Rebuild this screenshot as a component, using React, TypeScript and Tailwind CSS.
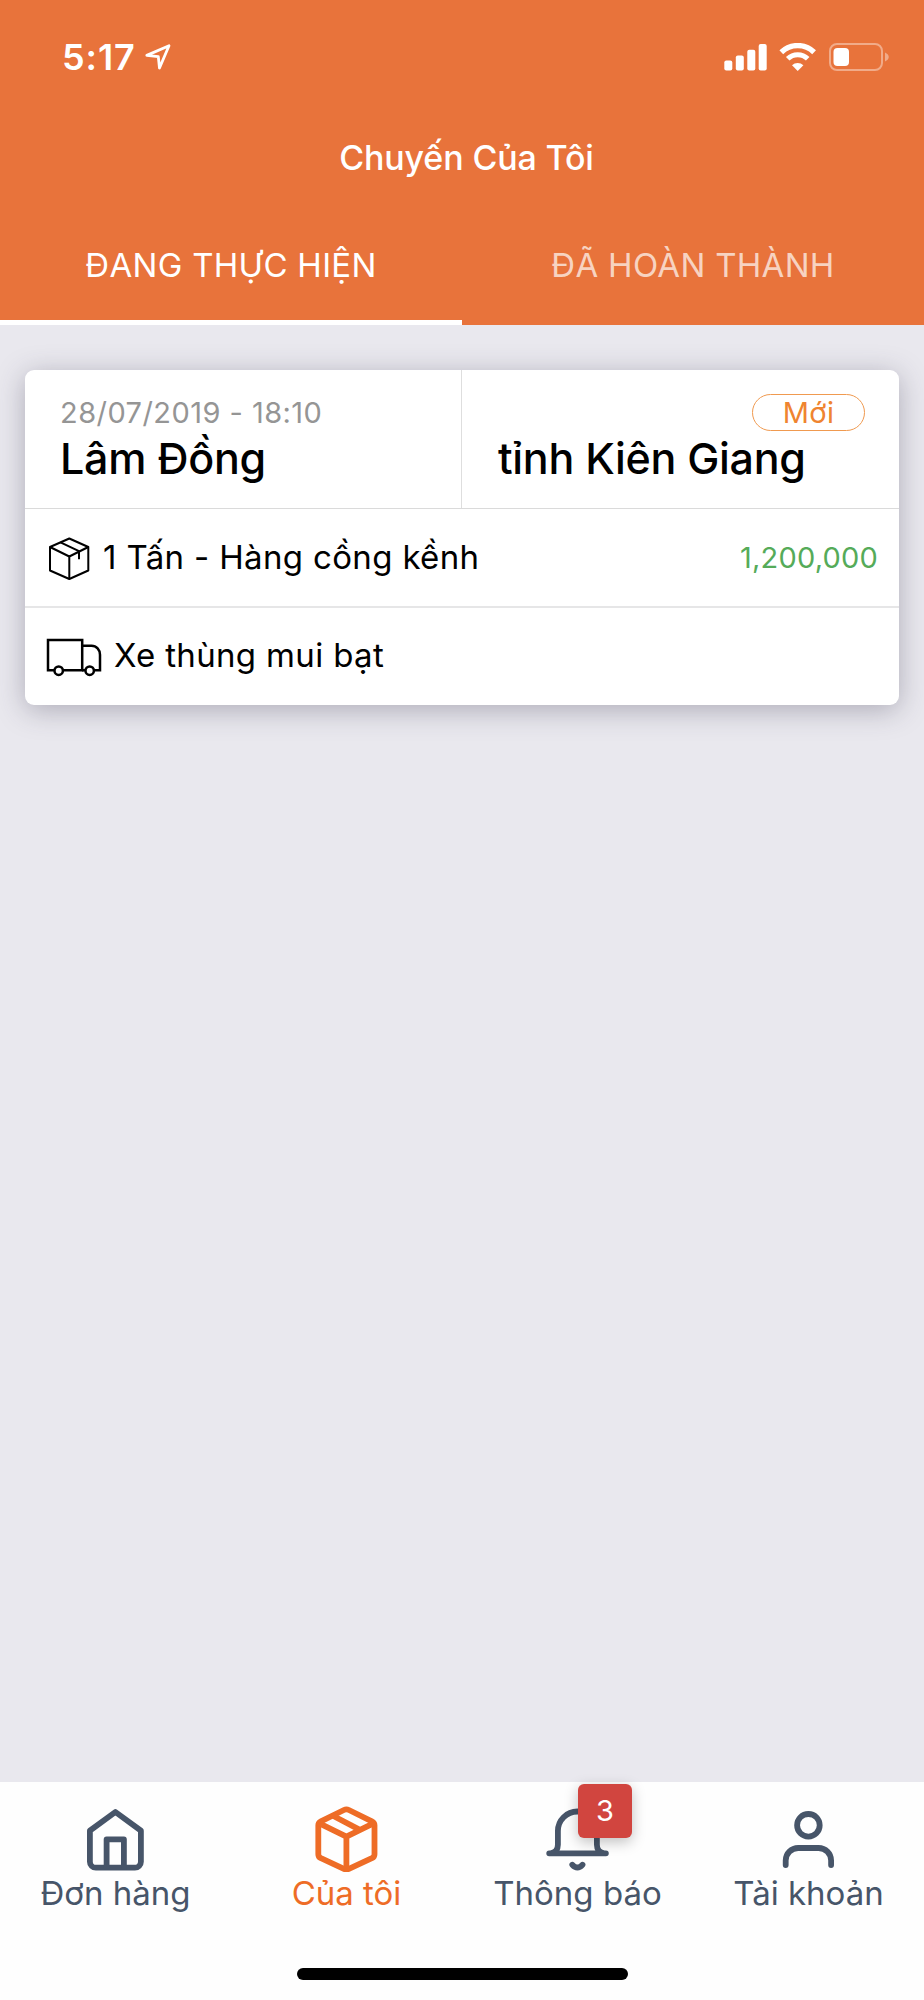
import type { ReactNode } from "react";
import clsx from "clsx";

function LocationIcon() {
  return (
    <svg width="28" height="28" viewBox="0 0 28 28" fill="none">
      <path d="M2.8 12.4 25 2.8 15.5 25 14.3 13.6z" stroke="white" strokeWidth="2.8" strokeLinejoin="round" />
    </svg>
  );
}

function SignalIcon() {
  return (
    <svg width="43" height="28" viewBox="0 0 43 28" fill="white">
      <rect x="0.3" y="17.5" width="8" height="10" rx="2" />
      <rect x="11.8" y="12.5" width="8" height="15" rx="2" />
      <rect x="23.3" y="6.8" width="8" height="20.7" rx="2" />
      <rect x="34.7" y="1" width="8" height="26.5" rx="2" />
    </svg>
  );
}

function WifiIcon() {
  return (
    <svg width="38" height="28" viewBox="0 0 38 28" fill="none">
      <path d="M2.3 9.2a23.6 23.6 0 0 1 32.8 0" stroke="white" strokeWidth="5.4" />
      <path d="M8.7 15.8a14.2 14.2 0 0 1 20 0" stroke="white" strokeWidth="5" />
      <path d="M13 22.2a8.6 8.6 0 0 1 11.4 0L18.7 27.9z" fill="white" />
    </svg>
  );
}

function BatteryIcon() {
  return (
    <svg width="61" height="28" viewBox="0 0 61 28">
      <rect x="1" y="1" width="52" height="26" rx="7" fill="none" stroke="white" strokeOpacity="0.4" strokeWidth="2" />
      <rect x="4.5" y="5" width="15.5" height="18" rx="4" fill="white" />
      <path d="M56 9.5c5 2 5 7 0 9z" fill="white" fillOpacity="0.4" />
    </svg>
  );
}

function PackageIcon() {
  return (
    <svg width="43" height="44" viewBox="0 0 43 44" fill="none" stroke="black" strokeWidth="2" strokeLinejoin="round">
      <path d="M21.3 2.5 40.3 11v23.5l-19 8.5-19.3-8.5V11z" />
      <path d="M2 11l19.3 9.5 19-9.5M21.3 20.5V43" />
      <path d="M12.5 6.3 31 15.2v8" />
    </svg>
  );
}

function TruckIcon() {
  return (
    <svg width="57" height="42" viewBox="0 0 57 42" fill="none" stroke="black" strokeWidth="2.5">
      <path d="M8.5 34.2H2V3.9h34.2v30.3H17" />
      <path d="M36 9.8h9.5c5 0 8.5 4 8.5 9v15.4h-6M36 34.2h3.5" />
      <circle cx="12.7" cy="34.7" r="4.2" />
      <circle cx="43.7" cy="34.7" r="4.2" />
    </svg>
  );
}

function NavIcon({ children }: { children: ReactNode }) {
  return (
    <svg
      width="64"
      height="70"
      viewBox="0.6 0 64 70"
      fill="none"
      stroke="currentColor"
      strokeWidth="5.8"
      strokeLinecap="round"
      strokeLinejoin="round"
    >
      {children}
    </svg>
  );
}

const tabs = [
  { label: "ĐANG THỰC HIỆN", active: true },
  { label: "ĐÃ HOÀN THÀNH", active: false },
];

const navItems = [
  {
    label: "Đơn hàng",
    icon: (
      <>
        <path d="M6.5 28.7 32 10l25.5 18.7v31a6 6 0 0 1-6 6h-39a6 6 0 0 1-6-6z" />
        <path d="M23.2 65V37.3h17.3V65" />
      </>
    ),
  },
  {
    label: "Của tôi",
    active: true,
    icon: (
      <>
        <path d="M29.5 8q2.5-1.2 5 0l23 11.3q2.6 1.3 2.6 4v28.9q0 2.7-2.6 4l-23 10.7q-2.5 1.2-5 0l-23-10.7q-2.6-1.3-2.6-4V23.3q0-2.7 2.6-4z" />
        <path d="M5 21.3l27 13.4 27-13.4M32 34.7V67M19 14l26 13.6" />
      </>
    ),
  },
  {
    label: "Thông báo",
    badge: 3,
    icon: (
      <>
        <path d="M3.8 51.3h56.7M5 51.3c5-.5 7.5-3.5 7.5-8.5V29a19.5 19.5 0 0 1 39 0v13.8c0 5 2.5 8 7.5 8.5" />
        <path d="M26.9 62.7q5.1 5.6 10.2 0" />
      </>
    ),
  },
  {
    label: "Tài khoản",
    icon: (
      <>
        <circle cx="32" cy="23.3" r="11.3" />
        <path d="M9.3 63v-4.5a12.5 12.5 0 0 1 12.5-12.5h20.4a12.5 12.5 0 0 1 12.5 12.5V63" />
      </>
    ),
  },
];

function Header() {
  return (
    <header className="bg-[#e8733b] text-white">
      <div className="flex h-[114px] items-center justify-between pl-[62px] pr-[34px]">
        <div className="flex items-center gap-2">
          <span className="text-4xl font-semibold tracking-[0.9px]">5:17</span>
          <LocationIcon />
        </div>
        <div className="flex items-center gap-3">
          <SignalIcon />
          <WifiIcon />
          <BatteryIcon />
        </div>
      </div>
      <h1 className="flex h-[86px] items-center justify-center pl-[9px] text-[34px] font-medium tracking-[-0.15px]">
        Chuyến Của Tôi
      </h1>
      <div className="grid grid-cols-2">
        {tabs.map((tab) => (
          <div
            key={tab.label}
            className={clsx(
              "flex h-[125px] items-center justify-center border-b-5 pt-[11px] text-[33px] tracking-[0.3px]",
              tab.active ? "border-white" : "border-transparent text-white/70",
            )}
          >
            {tab.label}
          </div>
        ))}
      </div>
    </header>
  );
}

function TripCard() {
  return (
    <div className="mx-[25px] mt-[45px] rounded-[9px] bg-white text-black shadow-[0_5px_28px_rgba(60,55,80,0.34)]">
      <div className="flex h-[139px] border-b border-[#dadada]">
        <div className="w-[437px] border-r border-[#dedede] pl-[35px] pt-[23px]">
          <div className="text-[29px] leading-[40px] tracking-[0.45px] text-[#959595]">28/07/2019 - 18:10</div>
          <div className="-mt-px text-[43px] leading-[52px] font-medium tracking-[-0.25px]">Lâm Đồng</div>
        </div>
        <div className="flex-1 pl-9 pt-[22px]">
          <div className="flex h-10 items-center justify-end pr-[34px]">
            <span className="flex h-[37px] w-[113px] items-center justify-center rounded-full border border-[#f09a50] pt-0.5 text-[29px] tracking-[0.3px] text-[#ef8430]">
              Mới
            </span>
          </div>
          <div className="text-[43px] leading-[52px] font-medium tracking-[-0.3px]">tỉnh Kiên Giang</div>
        </div>
      </div>
      <div className="flex h-[99px] items-center border-b-2 border-[#e6e6e7] pl-[23px] pr-[21px]">
        <PackageIcon />
        <span className="ml-3 text-[33px] tracking-[0.35px]">1 Tấn - Hàng cồng kềnh</span>
        <span className="ml-auto text-[29px] tracking-[0.2px] text-[#55ab59]">1,200,000</span>
      </div>
      <div className="flex h-[97px] items-center pl-[21px]">
        <TruckIcon />
        <span className="-mt-0.5 ml-[11px] text-[33px] tracking-[0.35px]">Xe thùng mui bạt</span>
      </div>
    </div>
  );
}

function BottomNav() {
  return (
    <footer className="h-[218px] bg-[#fefefe]">
      <nav className="grid h-[186px] grid-cols-4 pt-5">
        {navItems.map((item) => (
          <div
            key={item.label}
            className={clsx("relative flex flex-col items-center", item.active ? "text-[#ee6c26]" : "text-[#475569]")}
          >
            <NavIcon>{item.icon}</NavIcon>
            <span className="text-[33px] leading-[42px] whitespace-nowrap">{item.label}</span>
            {item.badge && (
              <span className="absolute -top-[18px] left-[116px] flex size-[54px] items-center justify-center rounded-md bg-[#d1453f] text-[29px] text-white shadow-[0_4px_14px_rgba(0,0,0,0.25)]">
                {item.badge}
              </span>
            )}
          </div>
        ))}
      </nav>
      <div className="mx-auto h-3 w-[331px] rounded-full bg-black" />
    </footer>
  );
}

export default function App() {
  return (
    <div className="flex h-[2000px] w-[924px] flex-col bg-[#e9e8ee] font-[Inter,sans-serif]">
      <Header />
      <main className="flex-1">
        <TripCard />
      </main>
      <BottomNav />
    </div>
  );
}
